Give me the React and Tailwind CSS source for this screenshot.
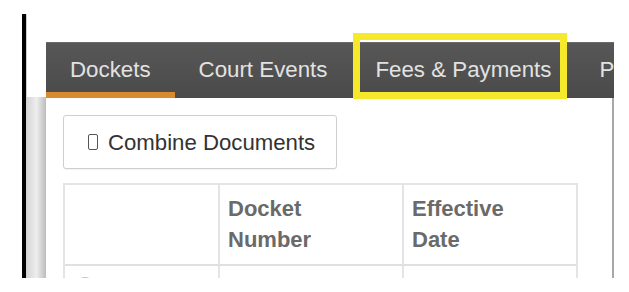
import React from "react";

const font = { fontFamily: '"Liberation Sans", Arial, sans-serif' };

function Tab({ label, active }) {
  return (
    <div className="relative h-full shrink-0 px-[24px] pt-[14px] text-[22.3px] leading-[25px] text-[#e2e2e2] whitespace-nowrap">
      {label}
      {active && (
        <div className="absolute left-0 right-0 bottom-0 h-[6px] bg-[#d88a2e]" />
      )}
    </div>
  );
}

export default function App() {
  return (
    <div
      className="relative w-[629px] h-[292px] bg-white overflow-hidden"
      style={font}
    >
      <div className="flex h-[278px] pt-[14px]">
        <div className="ml-[22px] w-[4px] bg-black" />
        <div className="w-[1px] bg-[#d0d0d0]" />
        <div className="flex w-[19px] flex-col">
          <div className="h-[83px]" />
          <div className="flex-1 bg-linear-to-r from-[#d6d6d6] via-[#eeeeee] to-[#bcbcbc]" />
        </div>
        <div className="flex w-[568px] flex-col pt-[28px]">
          <div className="flex h-[56px] overflow-hidden border-t border-[#6a6a6a] bg-linear-to-b from-[#575757] to-[#4a4a4a]">
            <Tab label="Dockets" active />
            <Tab label="Court Events" />
            <Tab label="Fees & Payments" />
            <Tab label="Pa" />
          </div>
          <div className="flex-1 overflow-hidden border-r-2 border-[#a8a8a8] pl-[17px] pt-[17px]">
            <button className="flex h-[54px] w-[274px] items-center rounded-[3px] border border-[#cfcfcf] bg-white pl-[24px] text-[22.2px] leading-[25px] text-[#333333] shadow-[0_1px_1px_rgba(0,0,0,0.05)]">
              <span className="mr-[10px] inline-block h-[16px] w-[10px] rounded-[2px] border-[1.5px] border-[#555555]" />
              Combine Documents
            </button>
            <div className="mt-[14px] w-[515px] border-2 border-b-0 border-[#e4e4e4]">
              <div className="flex border-b-2 border-[#e0e0e0]">
                <div className="w-[155px] border-r-2 border-[#e4e4e4]" />
                <div className="w-[184px] border-r-2 border-[#e4e4e4] pl-[8px] pt-[8px] pb-[9px] text-[22px] font-bold leading-[31px] text-[#6a6a6a]">
                  Docket
                  <br />
                  Number
                </div>
                <div className="flex-1 pl-[8px] pt-[8px] pb-[9px] text-[22px] font-bold leading-[31px] text-[#6a6a6a]">
                  Effective
                  <br />
                  Date
                </div>
              </div>
              <div className="flex h-[40px]">
                <div className="w-[155px] border-r-2 border-[#e4e4e4] pl-[10px] pt-[11px]">
                  <div className="h-[20px] w-[20px] rounded-full border-2 border-[#c4c4c4]" />
                </div>
                <div className="w-[184px] border-r-2 border-[#e4e4e4]" />
                <div className="flex-1" />
              </div>
            </div>
          </div>
        </div>
      </div>
      <div className="absolute left-[353px] top-[33px] h-[66px] w-[214px] border-[7px] border-[#f6e92b]" />
    </div>
  );
}
